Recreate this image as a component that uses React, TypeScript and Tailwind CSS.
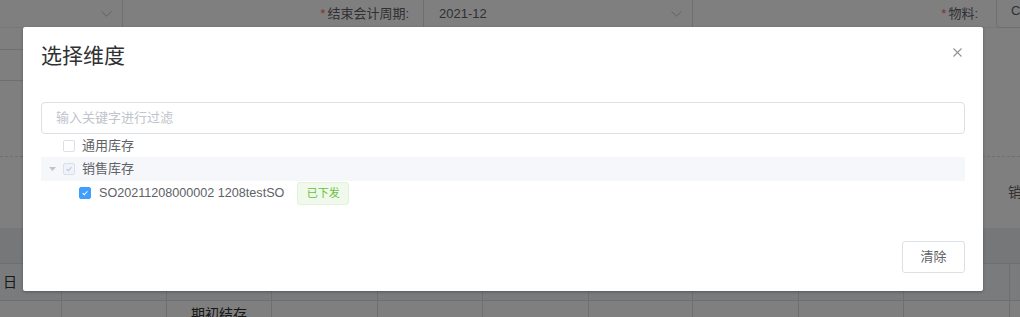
import React from "react";

const FONT = "font-['Liberation_Sans','Noto_Sans_CJK_SC',sans-serif]";

function Chevron() {
  return (
    <svg width="11" height="6" viewBox="0 0 11 6" className="block">
      <path d="M0.5 0.5 L5.5 5.2 L10.5 0.5" fill="none" stroke="#c0c4cc" strokeWidth="1" />
    </svg>
  );
}

function Check({ color }: { color: string }) {
  return (
    <svg width="12" height="12" viewBox="0 0 12 12" className="block">
      <path d="M3.2 6.1 L5.2 8.1 L8.9 3.9" fill="none" stroke={color} strokeWidth="1.3" />
    </svg>
  );
}

function Box({ state }: { state: "off" | "dis" | "on" }) {
  if (state === "on")
    return (
      <span className="flex h-[12px] w-[12px] items-center justify-center rounded-[2px] border border-[#409eff] bg-[#409eff]">
        <Check color="#ffffff" />
      </span>
    );
  if (state === "dis")
    return (
      <span className="flex h-[12px] w-[12px] items-center justify-center rounded-[2px] border border-[#dcdfe6] bg-[#edf2fc]">
        <Check color="#c0c4cc" />
      </span>
    );
  return <span className="block h-[12px] w-[12px] rounded-[2px] border border-[#dcdfe6] bg-white" />;
}

const cols = [62, 105, 105, 106, 105, 106, 104, 106, 105, 106, 60];

function TableRow({ first, third, bg, h, top }: { first?: string; third?: string; bg: string; h: string; top?: boolean }) {
  return (
    <div className={`flex ${h} ${bg} border-b border-[#dcdfe6]`}>
      {cols.map((w, i) => (
        <div
          key={i}
          style={{ width: w }}
          className={`flex shrink-0 justify-center border-r border-[#dcdfe6] text-[14px] text-[#303133] ${top ? "items-start pt-[3px]" : "items-center"}`}
        >
          {i === 0 && first ? <span className="mr-auto pl-[3px]">{first}</span> : null}
          {i === 2 && third ? <span className="leading-[20px]">{third}</span> : null}
        </div>
      ))}
    </div>
  );
}

export default function App() {
  return (
    <div className={`relative h-[317px] w-[1020px] overflow-hidden bg-white ${FONT}`}>
      {/* underlying page */}
      <div className="flex flex-col">
        <div className="flex h-[28px] items-center border-b border-[#ebeef5] text-[13px] text-[#606266]">
          <div className="flex h-full w-[123px] shrink-0 items-center justify-end border-r border-[#dcdfe6] pr-[10px]">
            <Chevron />
          </div>
          <div className="flex h-full w-[301px] shrink-0 items-center justify-end border-r border-[#dcdfe6] pr-[14px]">
            <span className="mr-[2px] text-[#f56c6c]">*</span>结束会计周期:
          </div>
          <div className="flex h-full w-[269px] shrink-0 items-center justify-between border-r border-[#dcdfe6] pl-[15px] pr-[10px]">
            <span>2021-12</span>
            <Chevron />
          </div>
          <div className="flex h-full w-[303px] shrink-0 items-center justify-end pr-[18px]">
            <span className="mr-[2px] text-[#f56c6c]">*</span>物料:
          </div>
          <div className="-mt-[6px] flex h-[34px] w-[80px] shrink-0 items-center rounded-[4px] border border-[#dcdfe6] pl-[14px]">
            C
          </div>
        </div>
        <div className="flex h-[129px] flex-col border-b border-dashed border-[#dcdfe6]">
          <div className="h-[22px] w-[23px] border-b border-[#dcdfe6]" />
          <div className="h-[31px] w-[23px] border-b border-[#dcdfe6]" />
        </div>
        <div className="flex h-[71px] items-center">
          <span className="ml-[1008px] whitespace-nowrap text-[14px] text-[#606266]">销售库存</span>
        </div>
        <div className="h-[36px] border-b border-[#dcdfe6] bg-[#eceef1]" />
        <TableRow first="日" bg="bg-[#f5f7fa]" h="h-[37px]" />
        <TableRow third="期初结存" bg="bg-white" h="h-[40px]" top />
      </div>

      {/* overlay */}
      <div className="absolute inset-0 bg-black/50" />

      {/* dialog */}
      <div className="absolute left-[23px] top-[27px] flex h-[264px] w-[960px] flex-col rounded-[2px] bg-white px-[18px] pb-[18px] pt-[16px] shadow-[0_1px_3px_rgba(0,0,0,0.3)]">
        <div className="flex h-[26px] items-start justify-between">
          <span className="text-[21px] leading-[26px] text-[#303133]">选择维度</span>
          <svg width="9" height="9" viewBox="0 0 9 9" className="mr-[3px] mt-[5px] block">
            <path d="M0.5 0.5 L8.5 8.5 M8.5 0.5 L0.5 8.5" stroke="#909399" strokeWidth="1.1" />
          </svg>
        </div>
        <div className="mt-[33px] flex h-[32px] items-center rounded-[4px] border border-[#dcdfe6] px-[14px] text-[13px] text-[#c0c4cc]">
          输入关键字进行过滤
        </div>
        <div className="flex flex-col text-[13px] text-[#606266]">
          <div className="flex h-[23px] items-center pl-[22px]">
            <Box state="off" />
            <span className="ml-[7px]">通用库存</span>
          </div>
          <div className="flex h-[24px] items-center bg-[#f5f7fa]">
            <span className="flex w-[22px] justify-end pr-[7px]">
              <svg width="7" height="4" viewBox="0 0 7 4" className="block">
                <path d="M0 0 L7 0 L3.5 4 Z" fill="#c0c4cc" />
              </svg>
            </span>
            <Box state="dis" />
            <span className="ml-[7px]">销售库存</span>
          </div>
          <div className="flex h-[24px] items-center pl-[38px]">
            <Box state="on" />
            <span className="ml-[8px] text-[12.6px]">SO20211208000002 1208testSO</span>
            <span className="ml-[13px] flex h-[23px] w-[52px] items-center justify-center rounded-[3px] border border-[#e1f3d8] bg-[#f0f9eb] text-[11px] text-[#67c23a]">
              已下发
            </span>
          </div>
        </div>
        <div className="mt-auto flex justify-end">
          <button className="flex h-[32px] w-[63px] items-center justify-center rounded-[3px] border border-[#dcdfe6] bg-white text-[13px] text-[#606266]">
            清除
          </button>
        </div>
      </div>
    </div>
  );
}
